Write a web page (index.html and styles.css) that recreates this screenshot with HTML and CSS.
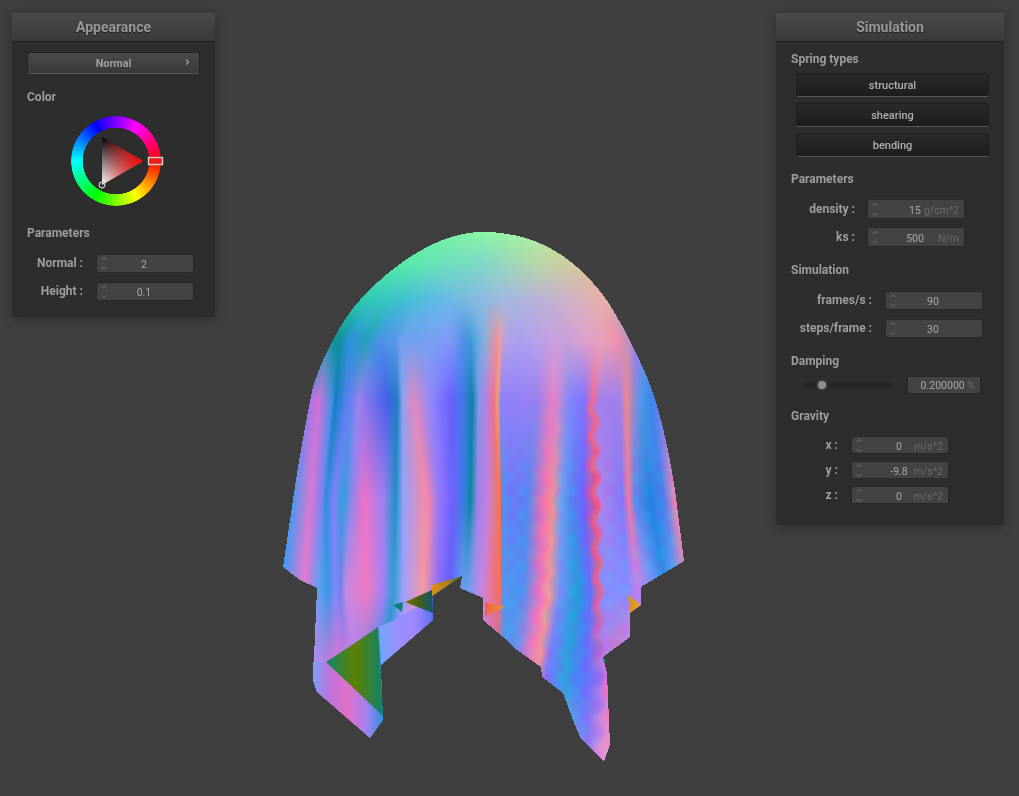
FILE: index.html
```html
<!DOCTYPE html>
<html lang="en">
<head>
    <meta charset="UTF-8">
    <meta name="viewport" content="width=device-width, initial-scale=1.0">
    <title>Cloth Simulator</title>
    <link rel="stylesheet" href="styles.css">
</head>
<body>

    <canvas id="cloth" class="scene" width="1019" height="796"></canvas>

    <div class="panel appearance">
        <div class="panel-title">Appearance</div>
        <div class="panel-body">
            <div class="dropdown">
                <span>Normal</span>
                <svg class="dropdown-arrow" width="6" height="8" viewBox="0 0 6 8"><path d="M2 1.5L4.5 4L2 6.5" fill="none" stroke="#a8a8a8" stroke-width="1.1"/></svg>
            </div>

            <h2 class="group color-group">Color</h2>
            <div class="wheel">
                <div class="wheel-ring"></div>
                <svg class="wheel-marks" width="100" height="92" viewBox="0 0 100 92">
                    <defs>
                        <linearGradient id="tri-shade" x1="0" y1="0" x2="0" y2="1">
                            <stop offset="0" stop-color="#000"/>
                            <stop offset="1" stop-color="#fff"/>
                        </linearGradient>
                        <linearGradient id="tri-hue" x1="0" y1="0" x2="1" y2="0">
                            <stop offset="0" stop-color="#f00" stop-opacity="0"/>
                            <stop offset="1" stop-color="#f00"/>
                        </linearGradient>
                    </defs>
                    <polygon points="32,22 73,46 32,70" fill="url(#tri-shade)"/>
                    <polygon points="32,22 73,46 32,70" fill="url(#tri-hue)"/>
                    <circle cx="32" cy="70" r="2.8" fill="none" stroke="#c8c8c8" stroke-width="1.2"/>
                    <rect x="78.5" y="42.5" width="14" height="7" fill="#f01a1a" stroke="#d8d0d0" stroke-width="1.4"/>
                </svg>
            </div>

            <h2 class="group params-group">Parameters</h2>
            <div class="rows left-rows">
                <div class="row">
                    <label>Normal :</label>
                    <div class="num">
                        <svg class="spin" width="8" height="15" viewBox="0 0 8 15"><path d="M1.5 4L4 1.5L6.5 4M1.5 11L4 13.5L6.5 11" fill="none" stroke="#777" stroke-width="0.9"/></svg>
                        <span class="val">2</span>
                    </div>
                </div>
                <div class="row">
                    <label>Height :</label>
                    <div class="num">
                        <svg class="spin" width="8" height="15" viewBox="0 0 8 15"><path d="M1.5 4L4 1.5L6.5 4M1.5 11L4 13.5L6.5 11" fill="none" stroke="#777" stroke-width="0.9"/></svg>
                        <span class="val">0.1</span>
                    </div>
                </div>
            </div>
        </div>
    </div>

    <div class="panel simulation">
        <div class="panel-title">Simulation</div>
        <div class="panel-body">
            <h2 class="group spring-group">Spring types</h2>
            <div class="toggles">
                <button class="toggle">structural</button>
                <button class="toggle">shearing</button>
                <button class="toggle">bending</button>
            </div>

            <h2 class="group after-toggles">Parameters</h2>
            <div class="rows density-rows">
                <div class="row">
                    <label>density :</label>
                    <div class="num">
                        <svg class="spin" width="8" height="15" viewBox="0 0 8 15"><path d="M1.5 4L4 1.5L6.5 4M1.5 11L4 13.5L6.5 11" fill="none" stroke="#777" stroke-width="0.9"/></svg>
                        <span class="val">15</span>
                        <span class="unit">g/cm^2</span>
                    </div>
                </div>
                <div class="row">
                    <label>ks :</label>
                    <div class="num">
                        <svg class="spin" width="8" height="15" viewBox="0 0 8 15"><path d="M1.5 4L4 1.5L6.5 4M1.5 11L4 13.5L6.5 11" fill="none" stroke="#777" stroke-width="0.9"/></svg>
                        <span class="val">500</span>
                        <span class="unit">N/m</span>
                    </div>
                </div>
            </div>

            <h2 class="group">Simulation</h2>
            <div class="rows frame-rows">
                <div class="row">
                    <label>frames/s :</label>
                    <div class="num">
                        <svg class="spin" width="8" height="15" viewBox="0 0 8 15"><path d="M1.5 4L4 1.5L6.5 4M1.5 11L4 13.5L6.5 11" fill="none" stroke="#777" stroke-width="0.9"/></svg>
                        <span class="val">90</span>
                    </div>
                </div>
                <div class="row">
                    <label>steps/frame :</label>
                    <div class="num">
                        <svg class="spin" width="8" height="15" viewBox="0 0 8 15"><path d="M1.5 4L4 1.5L6.5 4M1.5 11L4 13.5L6.5 11" fill="none" stroke="#777" stroke-width="0.9"/></svg>
                        <span class="val">30</span>
                    </div>
                </div>
            </div>

            <h2 class="group">Damping</h2>
            <div class="damping">
                <div class="slider">
                    <div class="slider-knob"></div>
                </div>
                <div class="percent">0.200000 <span class="unit">%</span></div>
            </div>

            <h2 class="group after-damping">Gravity</h2>
            <div class="rows gravity-rows">
                <div class="row">
                    <label>x :</label>
                    <div class="num">
                        <svg class="spin" width="8" height="15" viewBox="0 0 8 15"><path d="M1.5 4L4 1.5L6.5 4M1.5 11L4 13.5L6.5 11" fill="none" stroke="#777" stroke-width="0.9"/></svg>
                        <span class="val">0</span>
                        <span class="unit">m/s^2</span>
                    </div>
                </div>
                <div class="row">
                    <label>y :</label>
                    <div class="num">
                        <svg class="spin" width="8" height="15" viewBox="0 0 8 15"><path d="M1.5 4L4 1.5L6.5 4M1.5 11L4 13.5L6.5 11" fill="none" stroke="#777" stroke-width="0.9"/></svg>
                        <span class="val">-9.8</span>
                        <span class="unit">m/s^2</span>
                    </div>
                </div>
                <div class="row">
                    <label>z :</label>
                    <div class="num">
                        <svg class="spin" width="8" height="15" viewBox="0 0 8 15"><path d="M1.5 4L4 1.5L6.5 4M1.5 11L4 13.5L6.5 11" fill="none" stroke="#777" stroke-width="0.9"/></svg>
                        <span class="val">0</span>
                        <span class="unit">m/s^2</span>
                    </div>
                </div>
            </div>
        </div>
    </div>

    <script src="app.js"></script>
</body>
</html>
```

FILE: styles.css
```css
html, body {
    margin: 0;
    padding: 0;
}

body {
    position: relative;
    width: 1019px;
    height: 796px;
    overflow: hidden;
    background-color: #3f3f3f;
    font-family: Roboto, "Liberation Sans", sans-serif;
    color: #a8a8a8;
}

.scene {
    position: absolute;
    top: 0;
    left: 0;
}

/* floating windows */
.panel {
    position: absolute;
    top: 13px;
    background: #2d2d2d;
    border-radius: 2px;
    box-shadow: 0 2px 12px rgba(0, 0, 0, 0.3);
}

.appearance {
    left: 12px;
    width: 203px;
}

.simulation {
    left: 776px;
    width: 228px;
}

.panel-title {
    height: 28px;
    line-height: 28px;
    text-align: center;
    font-size: 14px;
    font-weight: 700;
    color: #989898;
    background: linear-gradient(#4a4a4a, #3a3a3a);
    border-bottom: 1px solid #1f1f1f;
    text-shadow: 0 1px 1px rgba(0, 0, 0, 0.5);
}

.panel-body {
    padding: 10px 15px 16px;
}

.simulation .panel-body {
    padding: 9px 15px 21px;
}

h2.group {
    margin: 15px 0 0;
    font-size: 12px;
    line-height: 16px;
    font-weight: 700;
    color: #9e9e9e;
}

h2.spring-group {
    margin-top: 0;
}

h2.after-toggles,
h2.after-damping {
    margin-top: 14px;
}

.dropdown {
    position: relative;
    height: 20px;
    line-height: 21px;
    text-align: center;
    font-size: 10.8px;
    font-weight: 700;
    color: #a0a0a0;
    background: linear-gradient(#4a4a4a, #393939);
    border: 1px solid #222;
    border-bottom-color: #555;
    border-radius: 3px;
}

.dropdown-arrow {
    position: absolute;
    top: 5px;
    right: 9px;
}

.wheel {
    position: relative;
    width: 92px;
    height: 92px;
    margin: 10px 0 0 43px;
}

.wheel-ring {
    position: absolute;
    top: 1px;
    left: 1px;
    width: 90px;
    height: 90px;
    border-radius: 50%;
    background: conic-gradient(from 90deg, #f00, #ff0, #0f0, #0ff, #00f, #f0f, #f00);
    -webkit-mask: radial-gradient(circle, transparent 33px, #000 33.6px);
    mask: radial-gradient(circle, transparent 33px, #000 33.6px);
}

.wheel-marks {
    position: absolute;
    top: 0;
    left: 0;
}

h2.params-group {
    margin-top: 18px;
}

.rows {
    display: flex;
    flex-direction: column;
    gap: 9px;
    margin-top: 13px;
}

.row {
    display: flex;
    align-items: center;
}

.row label {
    flex: none;
    margin-top: -1px;
    text-align: right;
    font-size: 12px;
    font-weight: 700;
    color: #9e9e9e;
}

.left-rows label { width: 56px; margin-right: 13px; }
.density-rows label { width: 64px; margin-right: 12px; }
.frame-rows label { width: 81px; margin-right: 13px; }
.gravity-rows label { width: 47px; margin-right: 13px; }

.density-rows {
    gap: 8px;
    margin-top: 12px;
}

.gravity-rows {
    gap: 7px;
    margin-top: 12px;
}

.num {
    display: grid;
    grid-template-columns: 1fr auto 1fr;
    align-items: center;
    box-sizing: border-box;
    width: 98px;
    height: 19px;
    padding: 0 5px 0 3px;
    font-size: 10.5px;
    background: #434343;
    border: 1px solid #282828;
    border-radius: 3px;
}

.density-rows .num { height: 20px; }
.gravity-rows .num { height: 18px; }

.spin {
    display: block;
}

.val {
    padding-top: 2px;
    color: #a8a8a8;
    text-align: center;
}

.unit {
    color: #686868;
    text-align: right;
}

.num .unit {
    padding-top: 2px;
}

.toggles {
    display: flex;
    flex-direction: column;
    gap: 6px;
    margin: 6px 0 0 5px;
}

.toggle {
    box-sizing: border-box;
    width: 193px;
    height: 24px;
    padding: 0;
    font-family: inherit;
    font-size: 11px;
    font-weight: 500;
    color: #b0b0b0;
    background: linear-gradient(#2a2a2a, #1c1c1c);
    border: 1px solid #1f1f1f;
    border-bottom-color: #585858;
    border-radius: 3px;
}

.damping {
    display: flex;
    align-items: center;
    margin: 7px 0 0 14px;
}

.slider {
    position: relative;
    width: 87px;
    height: 6px;
    margin-right: 15px;
    background: #262626;
    border-radius: 3px;
}

.slider-knob {
    position: absolute;
    top: -3px;
    left: 11px;
    width: 8px;
    height: 8px;
    background: #8e8e8e;
    border: 2px solid #3c3c3c;
    border-radius: 50%;
}

.percent {
    box-sizing: border-box;
    width: 74px;
    height: 18px;
    line-height: 17px;
    padding-right: 5px;
    text-align: right;
    font-size: 10.5px;
    color: #a8a8a8;
    background: #434343;
    border: 1px solid #282828;
    border-radius: 3px;
}
```

FILE: app.js
```javascript
// Cloth is painted as a colour mesh: every row has the same 36 columns (fold lines),
// so the x of a fold and its colour both slide from one row to the next.
const meshRows = [
    [340, "320 18a8b0 328 18a0b8 333 109098 340 10909c 347 2a90d8 360 2a98c8 365 20a0b0 372 3898d8 380 4a90e8 395 5a98e8 400 70a0f0 412 70a0f0 430 78a0f4 450 8098f8 463 5090e8 470 3f98d8 477 60a8e0 483 80b0e0 497 f09098 500 e8a0a0 503 b8a0e0 520 a8a0f0 537 b8a0e8 553 c8a0e0 560 c8a0d8 567 c8a0d8 580 d8a0d0 587 e0a0c8 598 e8a0c0 606 e8a0b8 617 f090a8 628 c090c0 637 8080ff 650 5090e8 660 8078ff 668 f08898"],
    [400, "303 8878f0 318 d070d8 331 4a90e8 335 1080c0 345 5080f0 352 7080f0 358 a080f0 364 8878f0 388 4060e8 397 2080c0 402 90a0f0 413 e088c0 430 9088f8 450 6860ff 463 4078e8 472 1080a8 478 8098e8 485 b080e8 493 f07090 497 f0a070 500 9080f8 510 9080f8 537 9880f0 553 e880c0 558 c888d8 568 8088f8 578 7c78ff 585 8870f8 592 f06a90 600 a080f0 620 a080e8 626 f08888 632 a088c8 640 5098e8 650 3888e8 660 7078ff 668 f088a0"],
    [500, "292 4a98f0 310 d878d0 321 8080f8 325 3090d8 333 8080f8 342 30a0d8 350 8088f0 363 f070c8 383 a080f0 395 2090c8 403 98a0f8 427 f888a0 438 9878f8 452 7060ff 465 3080d8 470 0888a0 477 a080e8 487 c080e0 497 f07868 500.5 f07050 501 5090e8 512 6c78f8 527 5088f0 543 f070b0 552 f09090 560 70a0f0 570 5088f0 583 7060ff 595 f05878 600 b080e8 622 8078f8 628 f078a0 634 6088f0 650 2084e0 664 5080f0 675 f088b0"],
    [590, "282 4a98f0 303 e878d0 318 60a0f0 327 3898e8 335 8088f8 340 7080f0 345 c888e0 367 f07ac0 383 a080f8 393 30a0d0 403 a0a0ff 423 f898a0 437 9070f8 450 6060f8 460 7098f0 465 60a0f0 475 a090f0 483 d080d8 495 f07070 500.5 f07060 501 6090e8 510 4a98f0 523 5090f0 540 f070c0 548 f09898 560 7090f8 577 20a0d8 590 6070ff 598 f06088 603 8090ff 628 8090ff 637 c080f0 650 8098f8 665 3090e8 675 60a0f0 690 f088b0"],
    [680, "305 80a0ff 313 90a0ff 320 c080e8 330 e070d0 337 f070c8 345 e078d0 357 b080f0 368 7088f0 377 3090e0 383 2080d0 392 8a80ff 405 9a88ff 420 5a80f0 440 6060f8 455 7098f0 465 60a0f0 475 a090f0 483 d080d8 490 c070e8 498 8080f0 505 5098f0 512 5098f0 518 b080e0 528 f080b8 536 f09098 545 8070ff 563 30a0e0 585 6070ff 598 9070f0 604 d070e0 608 f070b0 620 c080f0 640 8098f8 660 3090e8 675 60a0f0 690 f088b0"],
    [770, "305 80a0ff 313 90a0ff 320 c080e8 330 e070d0 337 f070c8 345 e078d0 357 b080f0 368 7088f0 377 3090e0 383 2080d0 392 8a80ff 405 9a88ff 420 5a80f0 440 6060f8 455 7098f0 465 60a0f0 475 a090f0 483 d080d8 490 c070e8 498 8080f0 505 5098f0 512 5098f0 518 b080e0 528 f080b8 536 f09098 545 8070ff 570 70a8f0 590 a080f0 598 e090d8 604 e8a0d0 610 e8a0c0 620 c080f0 640 8098f8 660 3090e8 675 60a0f0 690 f088b0"]
];

// dome rows are only a few stops, spread over the 36 columns
const domeRows = [
    [232, "340 4cf09c 403 5ef0a0 483 8af5a6 537 b0eca0 583 d8d090 620 f8b080"],
    [262, "340 48eca0 403 58eaa8 483 80d8c8 537 b8d8a8 583 d8c898 620 f4ac84"],
    [300, "340 20c8a8 370 30c8b8 403 40c0d0 437 60b8e8 470 80b8e0 503 a0b8e0 537 b8b0d8 570 d0b0c8 603 e8b0a8 640 f0a890"]
];

const silhouette = "M483 232C440 232 395 262 360 300C345 316 325 350 313 387C306 420 298 465 293 500L283 567L300 580L317 588L313 680L317 692L370 738L383 720L381 665L433 620L432 596L462 576L460 588L483 598L483 620L510 643L517 650L541 667L542 677L563 693L573 720L580 737L604 761L610 745L607 673L603 657L630 637L630 613L641 605L641 587L684 561L675 490C668 445 660 410 647 377C635 350 625 330 617 317C600 285 570 255 537 242C520 235 500 232 483 232Z";

function parseStops(text) {
    let parts = text.split(" ");
    let stops = [];
    for (let i = 0; i < parts.length; i += 2) {
        let n = parseInt(parts[i + 1], 16);
        stops.push({ x: parseFloat(parts[i]), r: n >> 16, g: (n >> 8) & 255, b: n & 255 });
    }
    return stops;
}

function sample(stops, x) {
    if (x <= stops[0].x) return stops[0];
    for (let i = 1; i < stops.length; i++) {
        if (x <= stops[i].x) {
            let a = stops[i - 1], b = stops[i];
            let t = (x - a.x) / Math.max(b.x - a.x, 0.01);
            return { x: x, r: a.r + (b.r - a.r) * t, g: a.g + (b.g - a.g) * t, b: a.b + (b.b - a.b) * t };
        }
    }
    return stops[stops.length - 1];
}

let rows = [];
domeRows.forEach(function (row) {
    let stops = parseStops(row[1]);
    let cols = [];
    for (let i = 0; i < 36; i++) {
        let c = sample(stops, 335 + (305 * i) / 35);
        cols.push({ x: 335 + (305 * i) / 35, r: c.r, g: c.g, b: c.b });
    }
    rows.push({ y: row[0], cols: cols });
});
meshRows.forEach(function (row) {
    rows.push({ y: row[0], cols: parseStops(row[1]) });
});

// the folds on the right of the cloth are crinkled: amplitude and phase per column
const wobble = { 23: [1.5, 0], 24: [1.5, 0.6], 28: [3, 2], 29: [2, 2.4] };

function scanline(y) {
    let k = 0;
    while (k < rows.length - 2 && y > rows[k + 1].y) k++;
    let a = rows[k], b = rows[k + 1];
    let t = Math.min(1, Math.max(0, (y - a.y) / (b.y - a.y)));
    let out = [];
    for (let i = 0; i < 36; i++) {
        let p = a.cols[i], q = b.cols[i];
        let x = p.x + (q.x - p.x) * t;
        if (wobble[i] && y > 400) {
            x += wobble[i][0] * Math.sin(y / 4.5 + wobble[i][1]);
        }
        out.push({ x: x, r: p.r + (q.r - p.r) * t, g: p.g + (q.g - p.g) * t, b: p.b + (q.b - p.b) * t });
    }
    return out;
}

const canvas = document.getElementById("cloth");
const ctx = canvas.getContext("2d");

// alpha of the filled outline is thresholded to get the hard edge of the GL render
ctx.fill(new Path2D(silhouette));
let image = ctx.getImageData(0, 0, canvas.width, canvas.height);
let data = image.data;

for (let y = 225; y < 770; y++) {
    let stops = scanline(y);
    // criss-cross creases only fade in lower down
    let crease = 4 * Math.min(1, Math.max(0, (y - 400) / 80));
    for (let x = 275; x < 695; x++) {
        let i = (y * canvas.width + x) * 4;
        if (data[i + 3] < 128) {
            data[i + 3] = 0;
            continue;
        }
        let c = sample(stops, x);
        let r = c.r, g = c.g, b = c.b;
        if (x > 503) {
            let n = (Math.sin((x + y) / 4) + Math.sin((x - y) / 4)) * crease;
            r -= n;
            g += n;
        }
        data[i] = r;
        data[i + 1] = g;
        data[i + 2] = b;
        data[i + 3] = 255;
    }
}
ctx.putImageData(image, 0, 0);

function shape(points, x0, x1, stops) {
    let grad = ctx.createLinearGradient(x0, 0, x1, 0);
    stops.forEach(function (s, i) {
        grad.addColorStop(i / (stops.length - 1), s);
    });
    ctx.fillStyle = grad;
    ctx.beginPath();
    points.forEach(function (p) {
        ctx.lineTo(p[0], p[1]);
    });
    ctx.closePath();
    ctx.fill();
}

// flaps in front of the lower layer
shape([[379, 627], [400, 617], [433, 597], [433, 620], [381, 665]], 379, 433, ["#70a8f8", "#9890ff", "#a088ff", "#5c70f0"]);
shape([[313, 662], [326, 662], [383, 716], [383, 720], [370, 738], [317, 692], [313, 680]], 313, 383, ["#7aa0f8", "#c070d8", "#e070c8", "#a880f0", "#3090e0"]);

// back faces showing under the hem
shape([[326, 662], [352, 645], [378, 627], [380, 660], [383, 716]], 326, 384, ["#0e8a6a", "#5e8000", "#0c8470"]);
shape([[405, 602], [432, 590], [433, 613]], 405, 434, ["#6c7a08", "#485c18", "#085a78"]);
shape([[393, 605], [403, 602], [402, 612]], 393, 403, ["#0a8078", "#0a8078"]);
shape([[432, 585], [462, 576], [432, 596]], 432, 462, ["#d88e1a", "#b08412", "#3c6a30"]);
shape([[485, 602], [505, 607], [485, 616]], 485, 505, ["#f06048", "#e89838"]);
shape([[628, 595], [641, 605], [630, 613]], 628, 641, ["#d09018", "#f0a040"]);
shape([[603, 657], [607, 662], [604, 663]], 603, 607, ["#0a8060", "#0a8060"]);
```
